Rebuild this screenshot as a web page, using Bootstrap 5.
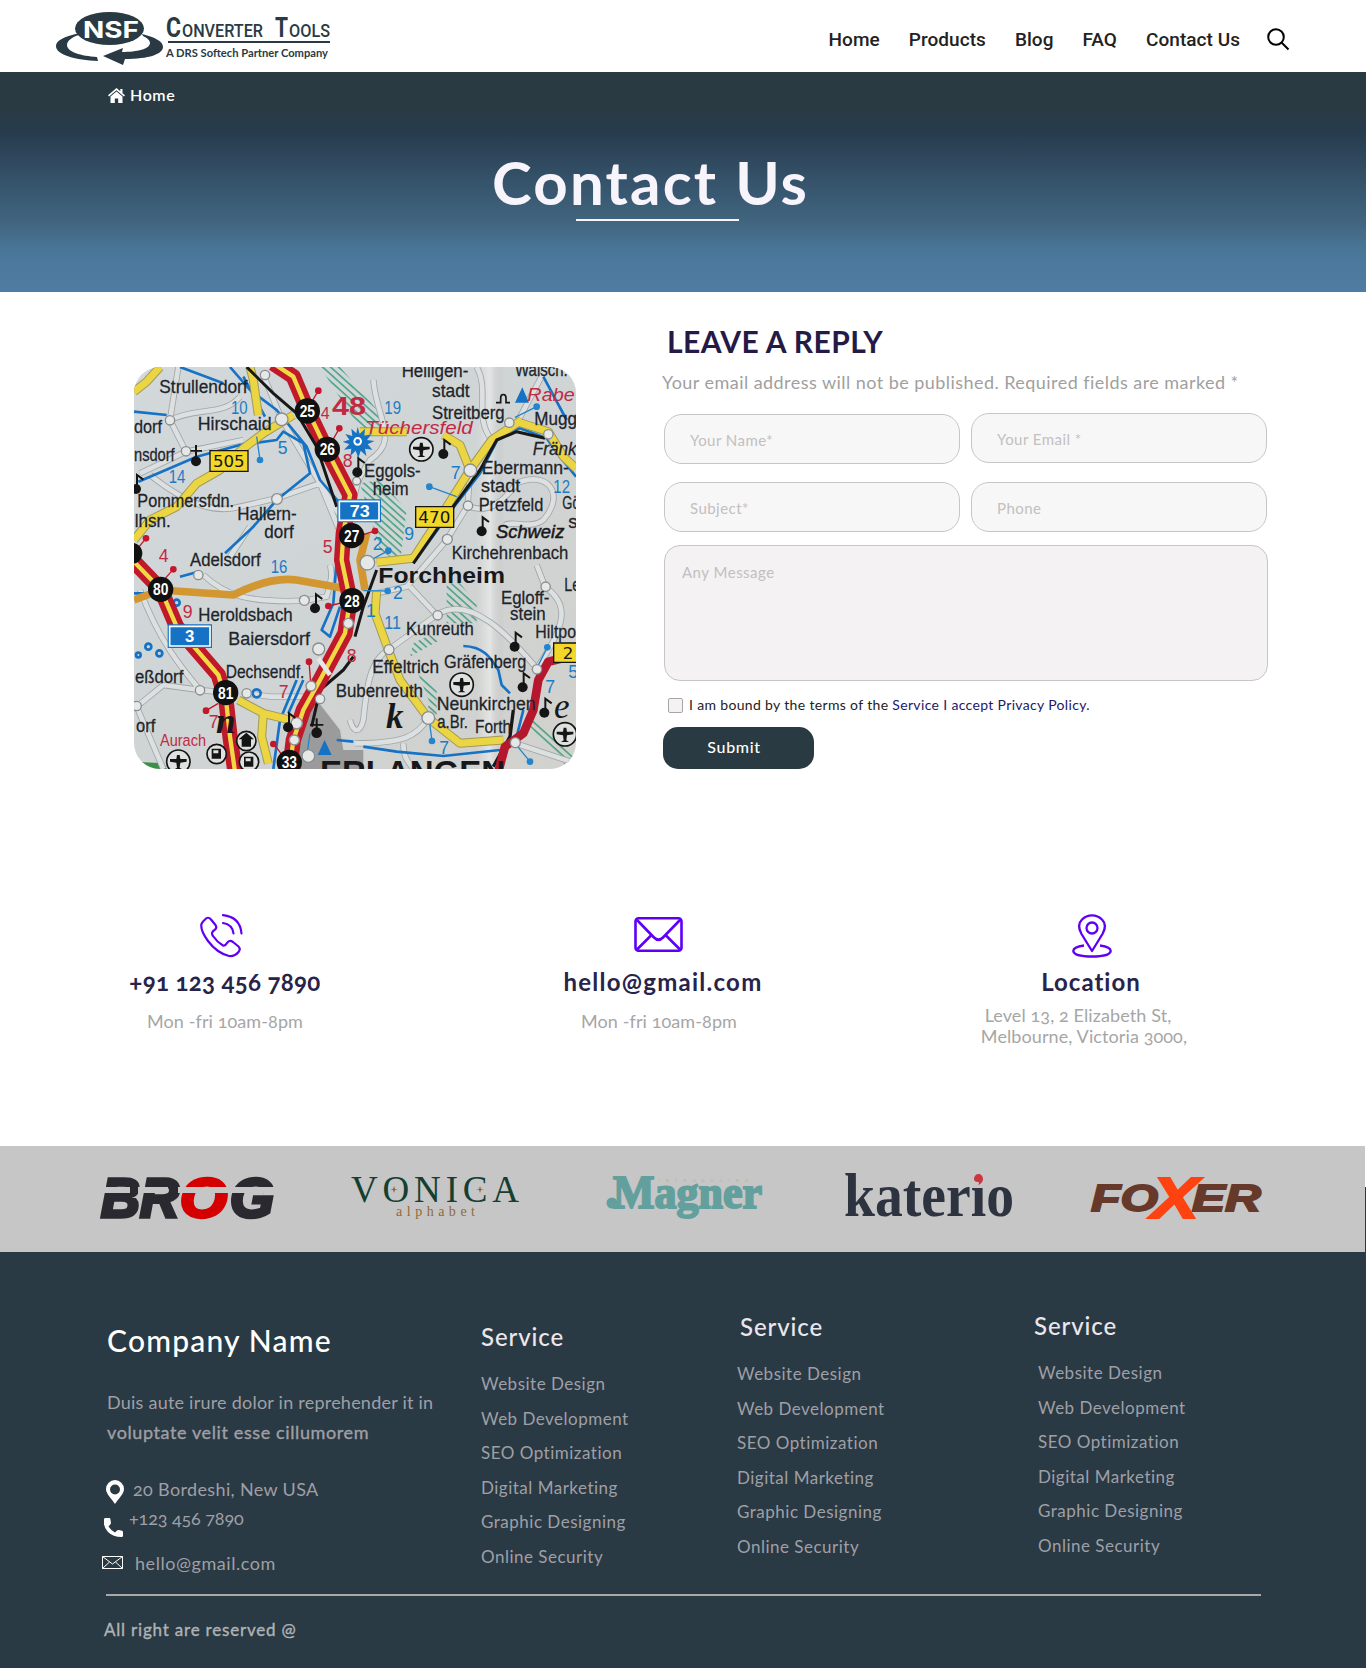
<!DOCTYPE html>
<html lang="en">
<head>
<meta charset="utf-8">
<meta name="viewport" content="width=device-width, initial-scale=1">
<title>Contact Us - NSF Converter Tools</title>
<link href="https://cdn.jsdelivr.net/npm/bootstrap@5.3.0/dist/css/bootstrap.min.css" rel="stylesheet">
<style>
body{font-family:Lato,"Open Sans",sans-serif;background:#fff;width:1366px;overflow-x:hidden;font-variant-numeric:oldstyle-nums}
svg{display:block;flex:none}
.site-head{height:72px;padding-left:56px;padding-right:76px}
.site-nav{font:500 19px/24px Roboto,sans-serif;gap:29px;letter-spacing:.05px;padding-top:7px}
.site-nav a{color:#222;text-decoration:none;white-space:nowrap}
.site-nav svg{margin-left:-2px}
.hero{height:220px;padding-top:13px;background:linear-gradient(#293a43 0,#293a43 18%,#273b4d 27%,#35536b 50%,#41657f 68%,#4a7799 82%,#4f7ca2 100%)}
.crumb{padding-left:108px;font-size:16px;line-height:20px;color:#fff;font-weight:600;gap:5px;letter-spacing:.6px}
.hero h1{font-size:60px;line-height:70px;font-weight:700;color:#f7f4fb;margin:42px 0 0 492px;letter-spacing:2.2px}
.rule-w{width:163px;height:2px;background:#f7f4fb;margin:2px 0 0 576px}
.map-col{padding:75px 86px 0 134px}
.map-box{width:442px;height:402px;border-radius:26px;overflow:hidden}
.reply{width:607px;padding-top:31px}
.reply h2{font-size:30px;line-height:36px;font-weight:700;color:#251a45;margin:0 0 11px 5px;letter-spacing:.42px}
.reply-note{font-size:18px;line-height:24px;color:#a09fa0;margin:0;white-space:nowrap;letter-spacing:.45px}
.fcols{gap:11px;padding-left:2px}
.fcol-a{padding-top:20px;gap:18px}
.fcol-b{padding-top:19px;gap:19px}
.fld{width:296px;height:50px;border:1px solid #c6c6c6;border-radius:18px;background:#f7f7f7;padding:1px 0 0 25px;font-size:15px;letter-spacing:.45px}
.area{width:604px;height:136px;margin:13px 0 0 2px;border:1px solid #c6c6c6;border-radius:16px;background:#f4f2f3;padding:15px 17px;font-size:15px;line-height:22px;resize:none;display:block;letter-spacing:.5px}
.fld::placeholder,.area::placeholder{color:#c2c0c1;opacity:1}
.terms{font-size:14px;line-height:20px;margin:14px 0 0 6px;color:#222;gap:6px;white-space:nowrap;letter-spacing:.34px}
.terms .form-check-input{width:15px;height:15px;margin:3px 0 0;border:1px solid #aaa5a8;border-radius:2px;background:#f4f2f3}
.terms a{color:#1c1a66;text-decoration:none}
.send,.send:hover{width:151px;height:42px;margin:12px 0 0 1px;background:#293a43;color:#fff;border:0;border-radius:15px;font-size:16px;font-weight:500;line-height:20px;padding:0 9px 3px 0;letter-spacing:.65px}
.reach{height:377px;padding:145px 0 0 8px;color:#a6a6a6;font-size:18px;line-height:21px;letter-spacing:.1px}
.reach-item{width:434px}
.reach-ico{height:44px}
.reach h3{font-size:24px;line-height:30px;font-weight:700;color:#28234a;margin:9px 0 14px;letter-spacing:.33px}
.reach h3.wide-ls{letter-spacing:1.25px}
.reach h3.loc{letter-spacing:1px;margin-bottom:8px}
.pin{padding-right:2px}
.adr{padding-right:18px}
.adr span{padding-right:12px}
.brands{height:106px;width:1365px;background:#c6c6c6}
.brand-wrap{background:linear-gradient(#fff 0 41px,#293a44 41px)}
.foot{background:#293a44;height:416px;color:#a09fa6;font-size:18px}
.foot-cols{height:342px;padding-left:107px}
.about{width:374px;padding-top:70px}
.about h4{font-size:30px;line-height:36px;font-weight:500;color:#fff;margin:0 0 29px;letter-spacing:1.2px}
.about p{line-height:30px;margin:0 0 30px;white-space:nowrap;letter-spacing:.23px}
.about .vol{letter-spacing:.61px;-webkit-text-stroke:.35px}
.f-line{height:24px;line-height:24px}
.l-pin{letter-spacing:.35px;gap:9px;margin-left:-1px}
.l-pin svg{margin-top:3px}
.l-tel{margin:5px 0 0 -3px;gap:6px;letter-spacing:-.12px}
.l-tel svg{margin-top:12px}
.l-mail{margin:21px 0 0 -5px;gap:12px;letter-spacing:.55px}
.l-mail svg{margin-top:5px}
.svc{font-size:17px;line-height:34.5px;letter-spacing:.5px}
.svc h5{font-size:24px;line-height:30px;font-weight:500;color:#ece6ec;margin:0 0 15px;letter-spacing:.9px}
.svc ul{list-style:none;margin:0;padding:0}
.svc-a{width:256px;padding-top:70px}
.svc-b{width:299px;padding-top:60px}
.svc-c{padding-top:59px}
.svc-b h5{padding-left:3px}
.svc-c h5{margin-left:-2px}
.svc-c ul{padding-left:2px}
.foot-rule{width:1155px;height:2px;background:#a9a9a9;margin-left:106px}
.copy{font-size:17px;line-height:24px;color:#b0b3b6;padding:22px 0 0 104px;letter-spacing:.8px;-webkit-text-stroke:.35px}
</style>
</head>
<body>
<header class="site-head d-flex align-items-center justify-content-between">
<svg width="276" height="56" viewBox="56 8 276 56" overflow="visible" aria-label="NSF Converter Tools">
<g fill="#293a44"><path fill-rule="evenodd" d="M80 33C62 37 56 41 56 46c0 9 20 14 42 15l-1-4c-16-1-30-5-30-12 0-4 5-8 12-10zM142 34c12 3 21 7 21 13 0 7-14 12-38 12l-2 6-20-9 20-8-1 4c15 0 28-3 28-9 0-3-3-5-7-7z"/><ellipse cx="109.500" cy="28.500" rx="34.500" ry="16.500"/></g>
<text x="83" y="38" font-family="Inter" font-weight="700" font-size="23" fill="#fff" textLength="56" lengthAdjust="spacingAndGlyphs">NSF</text>
<g fill="#293a44" font-family="Roboto" font-weight="500"><text x="166" y="37" font-size="27" font-weight="700" textLength="15" lengthAdjust="spacingAndGlyphs">C</text><text x="182" y="37" font-size="18.500" textLength="81" lengthAdjust="spacingAndGlyphs">ONVERTER</text><text x="275" y="37" font-size="27" font-weight="700" textLength="13" lengthAdjust="spacingAndGlyphs">T</text><text x="289" y="37" font-size="18.500" textLength="41" lengthAdjust="spacingAndGlyphs">OOLS</text></g>
<path d="M168 42H330" stroke="#293a44" stroke-width="2"/>
<text x="166" y="57" font-family="Lato" font-weight="700" font-size="11.500" fill="#293a44" textLength="162" lengthAdjust="spacingAndGlyphs">A DRS Softech Partner Company</text>
</svg>
<nav class="site-nav d-flex align-items-center"><a href="#">Home</a><a href="#">Products</a><a href="#">Blog</a><a href="#">FAQ</a><a href="#">Contact Us</a>
<svg width="23" height="23" viewBox="0 0 23 23" fill="none" stroke="#000" stroke-width="2"><circle cx="9" cy="9" r="7.800"/><path d="M14.500 14.500L21.500 21.500"/></svg></nav>
</header>
<section class="hero">
<div class="crumb d-flex align-items-center"><svg width="17" height="15" viewBox="0 0 17 15" fill="#fff"><path d="M8.500 0L0 7.300l1.100 1.200L8.500 2.200l7.400 6.300L17 7.300 14.500 5.200V1h-2.200v2.300z"/><path d="M8.500 3.500L2.500 8.600V15h4.300v-4.500h3.400V15h4.300V8.600z"/></svg><span>Home</span></div>
<h1>Contact Us</h1>
<div class="rule-w"></div>
</section>
<main class="d-flex">
<div class="map-col"><div class="map-box">
<svg width="442" height="402" viewBox="12 21 1326 1206" font-family="Liberation Sans">
<defs><linearGradient id="paper" x2="1" y2="1"><stop stop-color="#d3d8db"/><stop offset=".5" stop-color="#cfd4d5"/><stop offset="1" stop-color="#d2d1cd"/></linearGradient>
<linearGradient id="fold"><stop stop-color="#e6e7e6" stop-opacity="0"/><stop offset=".5" stop-color="#ecedec" stop-opacity=".7"/><stop offset="1" stop-color="#b9b9b8" stop-opacity=".1"/></linearGradient>
<pattern id="hatch" width="16" height="16" patternUnits="userSpaceOnUse" patternTransform="rotate(-48)"><path d="M3 0V16" stroke="#2f9a72" stroke-width="4"/></pattern>
<g id="plane"><circle r="35" fill="#dfe1e1" stroke="#151515" stroke-width="5"/><path d="M-25-8H-6L-4-20H4L6-8H25V0L6 3 4 18 12 23H-12L-4 18-6 3-25 0Z" fill="#151515"/></g>
<g id="note"><circle r="15" fill="#151515"/><path d="M3 0V-42L22-28" fill="none" stroke="#151515" stroke-width="6"/></g></defs>
<path fill="url(#paper)" d="M0 0h1350v1240H0z"/><path fill="url(#fold)" d="M1040 0h80v1240h-80z"/>
<path fill="#9b9b9b" d="M560 1020l70 90 10 60h60v60H490l10-120z"/><path fill="#3c8f46" d="M12 1205l90 5 10 20H12z"/>
<g fill="url(#hatch)"><path d="M570 21h60l130 150v60l-60-10zM690 370l60-10 80 90-20 160-60-40zM950 670h40l50 60v60h-90zM850 850l60-30 20 20-90 50zM860 930l60 60v90h-50l30-50zM1200 1060l140 130v40h-20l-120-130z"/></g>
<g fill="none" stroke-linejoin="round"><g stroke="#a2a6a7" stroke-width="19"><path id="lanes" d="M145 21L120 180L168 275M120 180C200 140 280 170 330 110M30 340L168 275L340 240M60 345C180 440 260 460 330 440L440 415L570 370L650 500M400 45L455 178L570 370L640 540M360 500L300 590M730 60C740 180 810 240 720 300C700 330 680 370 675 400M1040 21C1080 90 1030 170 1085 240M1250 21L1160 190M1020 330L1013 437L950 540L830 680L740 700M1013 437C1060 460 1110 440 1160 370C1250 330 1310 400 1240 480C1200 510 1150 480 1125 495M840 680L920 765C1020 700 1140 830 1220 925M775 870L920 765M775 870C720 900 710 980 700 1080C690 1120 670 1120 660 1080M30 690C90 850 160 930 210 990L287 998M20 1040L100 975L210 990M20 1040L100 1227M350 1000L420 1010L570 1010M895 1075C860 1130 820 1150 675 1150M820 1150C820 1200 840 1210 860 1240M1220 925C1320 780 1310 730 1245 680L1220 615M1155 1150L1338 1210M220 645C280 700 340 730 525 722L590 710C600 670 610 650 600 615"/></g><use href="#lanes" stroke="#dce0e1" stroke-width="14"/>
<g stroke="#1672c4" stroke-width="8"><path d="M12 155L110 165M150 21L280 70M300 21L360 90L440 150L530 260L570 360L630 430M25 365L200 290L330 255L440 240L460 215L520 250L540 340L440 420L370 500L285 580M340 50L405 170M620 600L610 730L575 810L600 830L630 740M500 960L450 1080L430 1227M520 960L475 1060M150 650L205 635M12 700H60M850 610L980 430L1050 340L1110 225L1170 205L1250 235L1290 290L1338 350M1240 50L1310 180M1000 858C1060 860 1080 890 1105 930L1115 975L1140 1000M700 1160L800 1175L940 1188L1110 1170M1180 1050L1160 1130M620 1140L670 1145"/><circle cx="140" cy="728" r="9"/><circle cx="55" cy="860" r="9"/><circle cx="88" cy="880" r="9"/><circle cx="25" cy="885" r="7"/><circle cx="380" cy="1000" r="12"/></g>
<g stroke="#a09b5a" stroke-width="27"><path id="ylw" d="M12 95L50 65L90 21M360 21L370 60L385 165M490 165L400 220L340 265L270 330L200 370L140 440L60 480L12 540M1175 180L1085 240L1020 330L925 480L850 595L740 607M1020 330L990 255L940 225M690 215L830 215M1160 185L1255 215L1300 290L1338 325M740 695L735 760L775 870L810 960L895 1075L990 1150L1120 1140M325 1020L400 1060L480 1080M400 1060L395 1130L415 1210"/></g><use href="#ylw" stroke="#ecd543" stroke-width="21"/>
<path d="M12 720L92 690L310 705C360 680 430 650 500 660L640 685M710 520L690 600L705 690" stroke="#d29731" stroke-width="23"/>
<path d="M850 610L940 480L1050 330L1100 240L1160 215L1245 235M675 830L700 740L740 630M670 890L640 930L570 990L545 1100" stroke="#181818" stroke-width="9"/><path d="M1090 1220L1140 1130L1150 1050" stroke="#181818" stroke-width="10"/>
<g stroke="#c01a2a" stroke-width="46"><path id="a73" d="M430 10L490 50L530 145L590 270L660 405L640 520L635 600L660 720L645 820L570 960L520 1050L490 1140L478 1235M12 605L92 688L140 800L265 945L288 1020L300 1130L315 1235"/></g><use href="#a73" stroke="#f0d944" stroke-width="13"/>
<path d="M350 21L430 100L500 160L560 260L620 440" stroke="#181818" stroke-width="9"/>
<path d="M1338 885L1255 905L1225 960L1210 1050L1180 1120L1125 1160L1105 1235" stroke="#b5172d" stroke-width="26"/></g>
<g stroke-width="4"><g stroke="#c3172c" fill="#c3172c"><path d="M540 135L565 92M600 255L628 205M92 670L130 628M665 722L595 738M228 1052L265 1030M537 905L543 980M430 1150L460 1190M48 535L15 575M735 513L690 527"/><circle cx="565" cy="92" r="8"/><circle cx="628" cy="205" r="8"/><circle cx="130" cy="628" r="8"/><circle cx="595" cy="738" r="8"/><circle cx="228" cy="1052" r="8"/><circle cx="537" cy="905" r="8"/><circle cx="430" cy="1152" r="8"/><circle cx="48" cy="535" r="8"/><circle cx="735" cy="513" r="8"/></g>
<g stroke="#2585cc" fill="#2585cc"><path d="M380 230L390 300M898 380L980 410M1155 172L1220 140M715 604L775 572M700 692L773 693M1220 925L1252 862M897 1075L906 1143M1155 1150L1200 1205M540 1120L530 1190"/><circle cx="390" cy="300" r="8"/><circle cx="898" cy="380" r="8"/><circle cx="1220" cy="140" r="8"/><circle cx="775" cy="572" r="8"/><circle cx="773" cy="693" r="8"/><circle cx="1252" cy="862" r="8"/><circle cx="906" cy="1143" r="8"/><circle cx="1200" cy="1205" r="8"/></g></g>
<g fill="#e6e8e8" stroke="#898d8f" stroke-width="4"><circle cx="405" cy="45" r="14"/><circle cx="120" cy="181" r="14"/><circle cx="168" cy="274" r="14"/><circle cx="455" cy="178" r="19"/><circle cx="441" cy="417" r="16"/><circle cx="1138" cy="188" r="14"/><circle cx="1255" cy="223" r="14"/><circle cx="1021" cy="331" r="19"/><circle cx="1014" cy="437" r="14"/><circle cx="952" cy="538" r="15"/><circle cx="712" cy="608" r="22"/><circle cx="205" cy="645" r="14"/><circle cx="523" cy="721" r="15"/><circle cx="655" cy="790" r="15"/><circle cx="566" cy="867" r="18"/><circle cx="543" cy="978" r="15"/><circle cx="570" cy="1017" r="14"/><circle cx="210" cy="991" r="14"/><circle cx="350" cy="1000" r="14"/><circle cx="500" cy="1090" r="17"/><circle cx="493" cy="1140" r="15"/><circle cx="535" cy="1188" r="19"/><circle cx="923" cy="766" r="14"/><circle cx="777" cy="869" r="15"/><circle cx="1247" cy="680" r="14"/><circle cx="1221" cy="928" r="14"/><circle cx="895" cy="1074" r="19"/><circle cx="1156" cy="1148" r="15"/><circle cx="680" cy="363" r="12"/><circle cx="20" cy="1038" r="14"/></g>
<path d="M565 895L600 945" stroke="#e6e8e8" stroke-width="14"/>
<g fill="#1672c4"><path d="M1155 128L1177 82L1197 128zM563 1185L584 1140L605 1185z"/><path d="M683 200l6 22 16-16-2 22 22-6-14 18 22 3-20 10 14 16-22-3 4 22-17-16-7 22-8-22-16 16 3-22-22 3 16-16-20-8 20-6-12-17 21 6-3-22 15 14z"/></g><circle cx="683" cy="244" r="10" fill="#1672c4" stroke="#fff" stroke-width="6"/>
<g><use href="#plane" x="874" y="268"/><use href="#plane" x="995" y="974"/><use href="#plane" x="145" y="1205"/><use href="#plane" x="1305" y="1123"/><g fill="#dfe1e1" stroke="#151515" stroke-width="5"><circle cx="349" cy="1143" r="29"/><circle cx="260" cy="1182" r="29"/><circle cx="357" cy="1205" r="29"/></g><path d="M335 1160v-22h-9l23-20 23 20h-9v22zM245 1166h28v30h-28zM342 1190h28v30h-28z" fill="#151515"/><path d="M250 1171h15v9h-15zM347 1195h15v9h-15z" fill="#dfe1e1"/>
<use href="#note" x="940" y="282"/><use href="#note" x="1055" y="514"/><use href="#note" x="1154" y="860"/><use href="#note" x="1178" y="982"/><use href="#note" x="1243" y="1058"/><use href="#note" x="555" y="745"/><use href="#note" x="474" y="1102"/><use href="#note" x="18" y="387"/><use href="#note" x="682" y="337"/><g fill="#151515"><circle cx="198" cy="304" r="15"/><path d="M195 255h6v40h-6zM182 270h34v5h-34z"/><circle cx="560" cy="1118" r="16"/><path d="M557 1075h6v40h-6zM540 1092h40v5h-40z"/></g></g>
<path d="M1098 128h14v-14c0-14 16-14 16 0v14h12" fill="none" stroke="#151515" stroke-width="5"/>
<g fill="#f2d628" stroke="#151515" stroke-width="4"><path d="M240 272h114v62H240zM857 440h114v62H857zM1271 849h80v58h-80z"/></g>
<g><path d="M113 793h133v71H113zM622 418h131v69H622z" fill="#1672c4"/><path d="M119 799h121v59H119zM628 424h119v57H628z" fill="none" stroke="#fff" stroke-width="5"/></g>
<g fill="#111"><circle cx="532" cy="153" r="38"/><circle cx="592" cy="268" r="38"/><circle cx="665" cy="527" r="38"/><circle cx="92" cy="688" r="38"/><circle cx="666" cy="722" r="38"/><circle cx="287" cy="998" r="38"/><circle cx="478" cy="1207" r="38"/><circle cx="5" cy="580" r="32"/></g>
<g font-weight="700" font-size="50" fill="#fff" text-anchor="middle"><text x="532" y="171" textLength="46" lengthAdjust="spacingAndGlyphs">25</text><text x="592" y="286" textLength="46" lengthAdjust="spacingAndGlyphs">26</text><text x="665" y="545" textLength="46" lengthAdjust="spacingAndGlyphs">27</text><text x="92" y="706" textLength="46" lengthAdjust="spacingAndGlyphs">80</text><text x="666" y="740" textLength="46" lengthAdjust="spacingAndGlyphs">28</text><text x="287" y="1016" textLength="46" lengthAdjust="spacingAndGlyphs">81</text><text x="478" y="1225" textLength="46" lengthAdjust="spacingAndGlyphs">33</text><text x="179" y="846">3</text><text x="689" y="470" textLength="60" lengthAdjust="spacingAndGlyphs">73</text></g>
<g font-size="50" fill="#151515" font-family="DejaVu Sans"><text x="249" y="321" textLength="95" lengthAdjust="spacingAndGlyphs">505</text><text x="865" y="489" textLength="96" lengthAdjust="spacingAndGlyphs">470</text><text x="1298" y="896">2</text></g>
<g font-size="56" fill="#20242a" stroke="#20242a" stroke-width=".8">
<text x="88" y="98" textLength="265" lengthAdjust="spacingAndGlyphs">Strullendorf</text><text x="203" y="209" textLength="222" lengthAdjust="spacingAndGlyphs">Hirschaid</text><text x="12" y="220" textLength="84" lengthAdjust="spacingAndGlyphs">dorf</text><text x="12" y="302" textLength="122" lengthAdjust="spacingAndGlyphs">nsdorf</text><text x="22" y="440" textLength="290" lengthAdjust="spacingAndGlyphs">Pommersfdn.</text><text x="14" y="500" textLength="108" lengthAdjust="spacingAndGlyphs">lhsn.</text><text x="322" y="480" textLength="178" lengthAdjust="spacingAndGlyphs">Hallern-</text><text x="403" y="534" textLength="88" lengthAdjust="spacingAndGlyphs">dorf</text><text x="180" y="618" textLength="212" lengthAdjust="spacingAndGlyphs">Adelsdorf</text>
<text x="815" y="50" textLength="200" lengthAdjust="spacingAndGlyphs">Heiligen-</text><text x="906" y="112" textLength="113" lengthAdjust="spacingAndGlyphs">stadt</text><text x="906" y="178" textLength="218" lengthAdjust="spacingAndGlyphs">Streitberg</text><text x="1155" y="48" textLength="158" lengthAdjust="spacingAndGlyphs">Walsch.</text><text x="1213" y="196" textLength="128" lengthAdjust="spacingAndGlyphs">Mugg</text><text x="1208" y="284" font-style="italic" textLength="132" lengthAdjust="spacingAndGlyphs">Fränk</text><text x="702" y="350" textLength="170" lengthAdjust="spacingAndGlyphs">Eggols-</text><text x="728" y="405" textLength="108" lengthAdjust="spacingAndGlyphs">heim</text><text x="1055" y="343" textLength="262" lengthAdjust="spacingAndGlyphs">Ebermann-</text><text x="1053" y="396" textLength="118" lengthAdjust="spacingAndGlyphs">stadt</text><text x="1046" y="452" textLength="194" lengthAdjust="spacingAndGlyphs">Pretzfeld</text><text x="1297" y="448" textLength="52" lengthAdjust="spacingAndGlyphs">Gö</text><text x="1315" y="505">s</text><text x="965" y="598" textLength="350" lengthAdjust="spacingAndGlyphs">Kirchehrenbach</text>
<text x="205" y="782" textLength="283" lengthAdjust="spacingAndGlyphs">Heroldsbach</text><text x="295" y="855" textLength="245" lengthAdjust="spacingAndGlyphs">Baiersdorf</text><text x="287" y="955" textLength="236" lengthAdjust="spacingAndGlyphs">Dechsendf.</text><text x="15" y="968" textLength="145" lengthAdjust="spacingAndGlyphs">eßdorf</text><text x="18" y="1115" textLength="58" lengthAdjust="spacingAndGlyphs">orf</text><text x="617" y="1010" textLength="262" lengthAdjust="spacingAndGlyphs">Bubenreuth</text>
<text x="1113" y="732" textLength="145" lengthAdjust="spacingAndGlyphs">Egloff-</text><text x="1140" y="780" textLength="107" lengthAdjust="spacingAndGlyphs">stein</text><text x="1303" y="694" textLength="48" lengthAdjust="spacingAndGlyphs">Le</text><text x="1216" y="835" textLength="122" lengthAdjust="spacingAndGlyphs">Hiltpo</text><text x="828" y="824" textLength="203" lengthAdjust="spacingAndGlyphs">Kunreuth</text><text x="942" y="923" textLength="247" lengthAdjust="spacingAndGlyphs">Gräfenberg</text><text x="727" y="940" textLength="200" lengthAdjust="spacingAndGlyphs">Effeltrich</text><text x="920" y="1050" textLength="297" lengthAdjust="spacingAndGlyphs">Neunkirchen</text><text x="922" y="1103" textLength="92" lengthAdjust="spacingAndGlyphs">a.Br.</text><text x="1035" y="1120" textLength="108" lengthAdjust="spacingAndGlyphs">Forth</text></g>
<g fill="#17181b" font-weight="700"><text x="745" y="668" font-size="66" textLength="380" lengthAdjust="spacingAndGlyphs">Forchheim</text><text x="570" y="1272" font-size="100" textLength="555" lengthAdjust="spacingAndGlyphs">ERLANGEN</text><text x="1098" y="533" font-size="54" font-style="italic" font-weight="400" stroke="#17181b" stroke-width="1.500" textLength="205" lengthAdjust="spacingAndGlyphs">Schweiz</text><g font-family="Liberation Serif" font-style="italic"><text x="258" y="1118" font-size="105">n</text><text x="768" y="1105" font-size="105">k</text><text x="1272" y="1075" font-size="105" font-weight="400">e</text></g></g>
<g fill="#1b7cc5" font-size="53"><text x="303" y="162" textLength="50" lengthAdjust="spacingAndGlyphs">10</text><text x="116" y="370" textLength="50" lengthAdjust="spacingAndGlyphs">14</text><text x="443" y="282">5</text><text x="422" y="638" textLength="50" lengthAdjust="spacingAndGlyphs">16</text><text x="763" y="161" textLength="50" lengthAdjust="spacingAndGlyphs">19</text><text x="962" y="356">7</text><text x="1270" y="398" textLength="50" lengthAdjust="spacingAndGlyphs">12</text><text x="823" y="540">9</text><text x="728" y="570">2</text><text x="789" y="718">2</text><text x="708" y="770">1</text><text x="763" y="808" textLength="50" lengthAdjust="spacingAndGlyphs">11</text><text x="1315" y="955">5</text><text x="1246" y="1000">7</text><text x="928" y="1182">7</text></g>
<g fill="#c22a44" font-size="53"><text x="572" y="178" font-size="48">4</text><text x="638" y="322">8</text><text x="86" y="606">4</text><text x="578" y="578">5</text><text x="158" y="775">9</text><text x="236" y="1105">7</text><text x="446" y="1015">7</text><text x="650" y="905">8</text><text x="90" y="1157" font-size="50" textLength="138" lengthAdjust="spacingAndGlyphs">Aurach</text><text x="606" y="165" font-size="76" font-weight="700" textLength="102" lengthAdjust="spacingAndGlyphs">48</text><text x="706" y="222" font-style="italic" font-size="57" textLength="322" lengthAdjust="spacingAndGlyphs">Tüchersfeld</text><text x="1192" y="122" font-style="italic" font-size="57" textLength="142" lengthAdjust="spacingAndGlyphs">Rabe</text></g>
</svg></div></div>
<form class="reply">
<h2>LEAVE A REPLY</h2>
<p class="reply-note">Your email address will not be published. Required fields are marked *</p>
<div class="fcols d-flex">
<div class="d-flex flex-column fcol-a"><input class="fld" placeholder="Your Name*"><input class="fld" placeholder="Subject*"></div>
<div class="d-flex flex-column fcol-b"><input class="fld" placeholder="Your Email *"><input class="fld" placeholder="Phone"></div>
</div>
<textarea class="area" placeholder="Any Message"></textarea>
<label class="terms d-flex"><input type="checkbox" class="form-check-input"><span>I am bound by the terms of the <a href="#">Service I accept Privacy Policy.</a></span></label>
<button type="button" class="btn send">Submit</button>
</form>
</main>
<section class="reach d-flex text-center">
<div class="reach-item"><div class="reach-ico d-flex justify-content-center pe-2"><svg width="43" height="44" viewBox="0 0 43 44" fill="none" stroke="#5f00f5" stroke-width="2.200" stroke-linecap="round"><path d="M5 5.500Q8 2 11 5.500L15.500 11Q17.500 14 14.500 16Q10.500 18.500 13 22Q17 28 23 31.500Q25 32.500 27 29Q29.500 25.500 33 28L38.500 32.500Q41 35 38.500 38Q35 42.500 29 42Q17 39 8 27Q0 16 1.500 10Q2.500 7.500 5 5.500ZM23 1.200Q40 3 41.500 19.500M23 9Q32.500 10.500 33.500 19.500"/></svg></div><h3>+91 123 456 7890</h3><span>Mon -fri 10am-8pm</span></div>
<div class="reach-item"><div class="reach-ico d-flex justify-content-center"><svg width="50" height="40" viewBox="0 -3 50 40" fill="none" stroke="#5f00f5" stroke-width="2.600"><rect x="1.500" y="1.300" width="46" height="32.500" rx="3"/><path d="M3 3L20 20.500Q24.500 25 29 20.500L46 3M3 32.500L17.500 18M46 32.500L31.500 18"/></svg></div><h3 class="ps-2 wide-ls">hello@gmail.com</h3><span>Mon -fri 10am-8pm</span></div>
<div class="reach-item"><div class="reach-ico d-flex justify-content-center pin"><svg width="40" height="44" viewBox="0 0 40 44" fill="none" stroke="#5f00f5" stroke-width="2.300" stroke-linejoin="round"><path d="M20 37L9.500 20Q4.500 11 10 5.500Q14 1.300 20 1.300T30 5.500Q35.500 11 30.500 20Z"/><circle cx="20" cy="14" r="5.500"/><path d="M12 31.500Q1.300 33 1.300 37Q2 42.500 20 42.500T38.700 37Q38.700 33 28 31.500"/></svg></div><h3 class="pe-1 loc">Location</h3><div class="adr"><span>Level 13, 2 Elizabeth St,</span><br>Melbourne, Victoria 3000,</div></div>
</section>
<div class="brand-wrap"><section class="brands">
<svg width="1365" height="106" viewBox="0 1146 1365 106">
<g font-family="Liberation Sans" font-weight="700" font-style="italic" font-size="55" stroke-width="3.500" stroke-linejoin="miter"><g fill="#2a2930" stroke="#2a2930"><text x="101" y="1217" textLength="39" lengthAdjust="spacingAndGlyphs">B</text><text x="140" y="1217" textLength="39" lengthAdjust="spacingAndGlyphs">R</text><text x="230" y="1217" textLength="44" lengthAdjust="spacingAndGlyphs">G</text></g><text x="180" y="1217" fill="#d40000" stroke="#d40000" textLength="47" lengthAdjust="spacingAndGlyphs">O</text></g>
<path d="M100 1187H130V1193H100zM138 1187H168V1193H138zM178 1187H278V1193H178z" fill="#c6c6c6"/>
<text x="351" y="1202" font-family="Liberation Serif" font-size="37" fill="#153f30" textLength="168" lengthAdjust="spacing">VONICA</text><text x="396" y="1216" font-family="Liberation Serif" font-size="14" fill="#8d6a3a" textLength="79">alphabet</text><path d="M394 1186l1 3 3 0-3 1-1 3-1-3-3-1 3 0zM480 1186l1 3 3 0-3 1-1 3-1-3-3-1 3 0z" fill="#8d6a3a"/>
<g fill="#639f9c"><text x="613" y="1208" font-family="Liberation Serif" font-weight="700" font-size="46" stroke="#639f9c" stroke-width="2" textLength="149" lengthAdjust="spacingAndGlyphs">Magner</text><circle cx="612" cy="1203" r="5.500"/></g><text x="659" y="1182" font-family="Liberation Sans" font-size="4" fill="#c6a878" textLength="89">INTRODUCING</text>
<text x="844" y="1216" font-family="Liberation Serif" font-weight="700" font-size="61" fill="#2d3440" textLength="170" lengthAdjust="spacingAndGlyphs">katerıo</text><path d="M974 1179a4.500 5 0 1 1 9 0q0 4-5 6 2-3 0-3-4 0-4-3z" fill="#cb3640"/>
<g font-family="Liberation Sans" font-weight="700" font-style="italic" font-size="37" fill="#66392b" stroke="#66392b" stroke-width="1.800"><text x="1091" y="1210.500" textLength="67" lengthAdjust="spacingAndGlyphs">FO</text><text x="1192" y="1210.500" textLength="69" lengthAdjust="spacingAndGlyphs">ER</text><text x="1151" y="1218" font-size="57" fill="#ff4310" stroke="#ff4310" textLength="48" lengthAdjust="spacingAndGlyphs">X</text></g>
</svg></section></div>
<footer class="foot">
<div class="foot-cols d-flex">
<div class="about"><h4>Company Name</h4><p>Duis aute irure dolor in reprehender it in<br><span class="vol">voluptate velit esse cillumorem</span></p>
<div class="f-line d-flex l-pin"><svg width="18" height="24" viewBox="0 0 18 24" fill="#fff"><path fill-rule="evenodd" d="M9 0a9 9 0 0 1 9 9c0 5-6 10-9 15C6 19 0 14 0 9a9 9 0 0 1 9-9zm0 4.500a5 5 0 1 0 0 10 5 5 0 0 0 0-10z"/></svg><span>20 Bordeshi, New USA</span></div>
<div class="f-line d-flex l-tel"><svg width="19" height="19" viewBox="0 0 19 19" fill="#fff"><path d="M1 0h4.500q1 0 1 2l.5 3q0 1-2.500 3.500Q7 12.500 11 14.500l2-2q1-.7 2-.4l3 .6q1 .2 1 1.300v4q0 1-1.500 1Q9 19 4 14T0 1.500Q0 0 1 0z"/></svg><span>+123 456 7890</span></div>
<div class="f-line d-flex l-mail"><svg width="21" height="13" viewBox="0 0 21 13" fill="none" stroke="#fff"><path d="M.5.500h20v12H.5zL10.500 8 20.500.5M.5 12.500L7.500 6M20.500 12.500L13.500 6"/></svg><span>hello@gmail.com</span></div></div>
<div class="svc svc-a"><h5>Service</h5><ul><li>Website Design</li><li>Web Development</li><li>SEO Optimization</li><li>Digital Marketing</li><li>Graphic Designing</li><li>Online Security</li></ul></div>
<div class="svc svc-b"><h5>Service</h5><ul><li>Website Design</li><li>Web Development</li><li>SEO Optimization</li><li>Digital Marketing</li><li>Graphic Designing</li><li>Online Security</li></ul></div>
<div class="svc svc-c"><h5>Service</h5><ul><li>Website Design</li><li>Web Development</li><li>SEO Optimization</li><li>Digital Marketing</li><li>Graphic Designing</li><li>Online Security</li></ul></div>
</div>
<div class="foot-rule"></div>
<div class="copy">All right are reserved @</div>
</footer>
<script src="https://cdn.jsdelivr.net/npm/bootstrap@5.3.0/dist/js/bootstrap.bundle.min.js"></script>
</body>
</html>
